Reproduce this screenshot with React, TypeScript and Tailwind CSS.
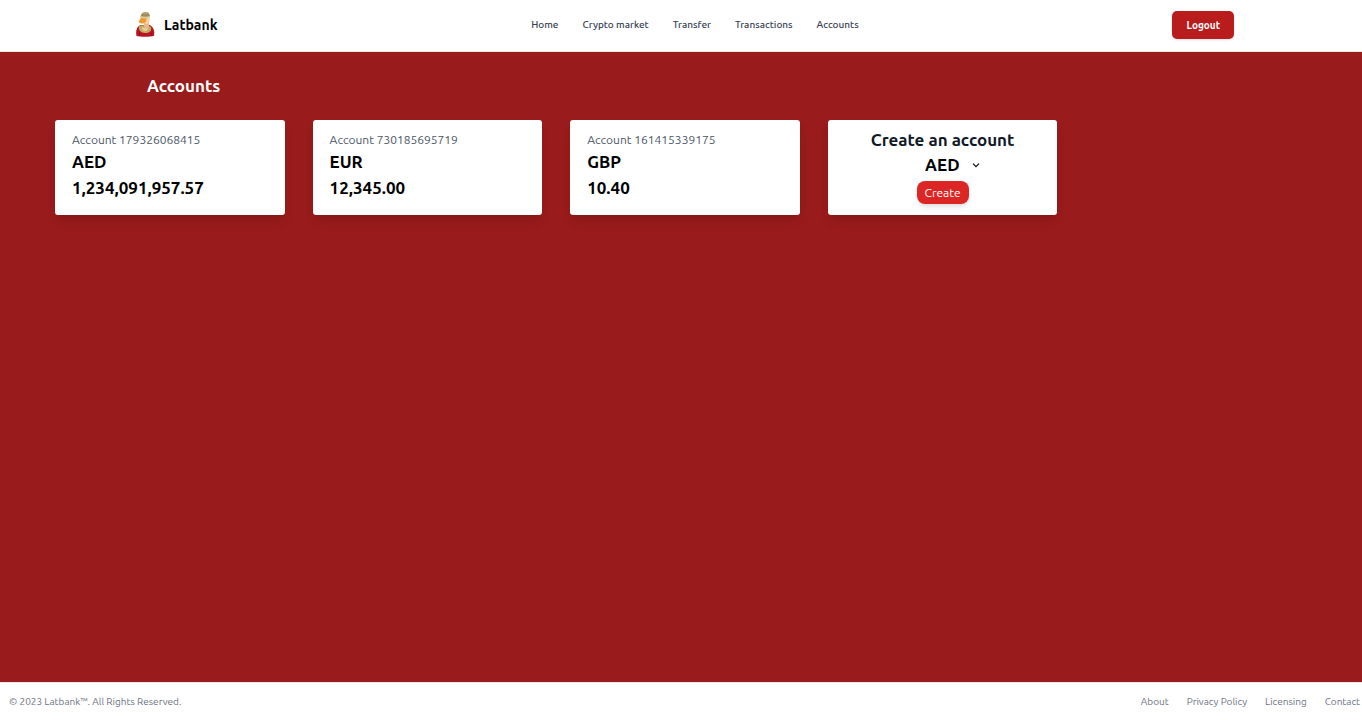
import { useState } from "react";

const links = ["Home", "Crypto market", "Transfer", "Transactions", "Accounts"];
const accounts = [
  { number: "179326068415", currency: "AED", balance: "1,234,091,957.57" },
  { number: "730185695719", currency: "EUR", balance: "12,345.00" },
  { number: "161415339175", currency: "GBP", balance: "10.40" },
];
const footerLinks = ["About", "Privacy Policy", "Licensing", "Contact"];

function Logo() {
  return (
    <svg viewBox="0 0 32 32" className="size-8" aria-hidden="true">
      <path d="M8.500 27c-1-5 0-9 4-11h9c4 2 5.500 6 4.500 11-4 1-13.500 1-17.500 0z" fill="#b81424" />
      <path d="M11.500 27v-3.500m12 3.500v-3.500" stroke="#8a1220" />
      <path d="M11 17c2-1 10-1 12 1 1 4-2 6-6 6s-7-3-6-7z" fill="#c3ab62" />
      <path d="M14 18c2 1.500 4 1.500 6 0 0 2.500-1 4-3 4s-3-1.500-3-4z" fill="#e3d29a" />
      <path d="M16 12h5v6c-1 1.500-4 1.500-5 0z" fill="#e9b98c" />
      <path d="M14 8h7.500c.8 3 0 6-2 7-3 0-5.500-2-5.500-7z" fill="#f8d0a8" />
      <path d="M13 8c-.5 2-1.500 3.500-2.500 5 1 1.500 3 1.500 4.500 1.500 2.500-.5 4-3 3.500-6z" fill="#f39a2d" />
      <path d="M12.500 8c0-3 2.500-5 5-5 3 0 4.500 2 4.500 5-3 1-6.500 1-9.500 0z" fill="#a08b60" />
      <path d="M12.500 7c3 1 6.500 1 9.500 0v1.800c-3 1-6.500 1-9.500 0z" fill="#dccd9f" />
      <path d="M15.500 4.500c1-.7 2.500-.7 3.500-.2" fill="none" stroke="#d3c08c" />
    </svg>
  );
}

export default function App() {
  const [currency, setCurrency] = useState("AED");
  return (
    <div className="flex min-h-screen flex-col bg-[#991b1b] font-['Ubuntu','Noto_Sans',sans-serif]">
      <header className="border-b border-gray-200 bg-white pb-px">
        <div className="mx-auto flex h-[50px] max-w-[1106px] items-center justify-between">
          <a href="#" className="flex items-center gap-1 text-[14px] leading-5 font-semibold text-black">
            <Logo />
            Latbank
          </a>
          <nav className="flex gap-6 text-[10px] leading-4 font-medium text-gray-700">
            {links.map((l) => (
              <a key={l} href="#">{l}</a>
            ))}
          </nav>
          <button className="h-7 rounded-[5px] bg-[#b91c1c] px-[14px] text-[10px] font-semibold text-white shadow-sm">
            Logout
          </button>
        </div>
      </header>
      <main className="grow">
        <h1 className="pt-[22px] pl-[147px] text-[17px] leading-6 font-bold text-white">Accounts</h1>
        <div className="mt-[22px] grid grid-cols-5 gap-7 pr-[47px] pl-[55px]">
          {accounts.map((a) => (
            <section
              key={a.number}
              className="h-[95px] rounded-[3px] bg-white px-[17px] pt-[11px] shadow-[0_7px_11px_-2px_rgb(0_0_0/0.1),0_3px_4px_-3px_rgb(0_0_0/0.1)]"
            >
              <p className="text-[12px] leading-[18px] text-gray-600">Account {a.number}</p>
              <h2 className="text-[17px] leading-[26px] font-semibold text-black">{a.currency}</h2>
              <p className="text-[17px] leading-[26px] font-semibold text-black">{a.balance}</p>
            </section>
          ))}
          <form
            onSubmit={(e) => e.preventDefault()}
            className="flex h-[95px] flex-col items-center rounded-[3px] bg-white pt-2 shadow-[0_7px_11px_-2px_rgb(0_0_0/0.1),0_3px_4px_-3px_rgb(0_0_0/0.1)]"
          >
            <label htmlFor="currency" className="text-[17px] leading-6 font-semibold text-gray-900">
              Create an account
            </label>
            <div className="grid items-center">
              <select
                id="currency"
                value={currency}
                onChange={(e) => setCurrency(e.target.value)}
                className="col-start-1 row-start-1 h-[26px] appearance-none bg-white px-5 text-[17px] leading-[26px] font-semibold text-black"
              >
                <option>AED</option>
                <option>EUR</option>
                <option>GBP</option>
              </select>
              <svg viewBox="0 0 8 8" className="pointer-events-none col-start-1 row-start-1 size-2 justify-self-end" aria-hidden="true">
                <path d="M1 2.600L4 5.600l3-3" fill="none" stroke="#111" strokeWidth="1.3" />
              </svg>
            </div>
            <button className="mt-[3px] h-[23px] rounded-lg bg-[#dc2626] px-2 text-[12px] leading-5 text-white shadow-md">
              Create
            </button>
          </form>
        </div>
      </main>
      <footer className="flex h-[38px] items-center justify-between border-t border-gray-200 bg-white pr-[2px] pl-[9px] text-[10px] leading-4 text-gray-500">
        <span>© 2023 Latbank™. All Rights Reserved.</span>
        <nav className="flex gap-[18px]">
          {footerLinks.map((l) => (
            <a key={l} href="#">{l}</a>
          ))}
        </nav>
      </footer>
    </div>
  );
}
